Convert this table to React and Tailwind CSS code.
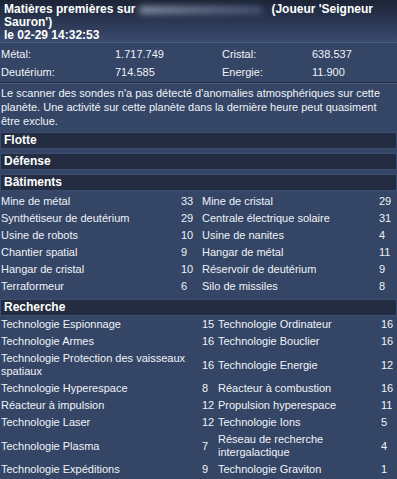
import React from "react";

const buildings = [
  ["Mine de métal", "33", "Mine de cristal", "29"],
  ["Synthétiseur de deutérium", "29", "Centrale électrique solaire", "31"],
  ["Usine de robots", "10", "Usine de nanites", "4"],
  ["Chantier spatial", "9", "Hangar de métal", "11"],
  ["Hangar de cristal", "10", "Réservoir de deutérium", "9"],
  ["Terraformeur", "6", "Silo de missiles", "8"],
];

const research = [
  ["Technologie Espionnage", "15", "Technologie Ordinateur", "16"],
  ["Technologie Armes", "16", "Technologie Bouclier", "16"],
  ["Technologie Protection des vaisseaux spatiaux", "16", "Technologie Energie", "12"],
  ["Technologie Hyperespace", "8", "Réacteur à combustion", "16"],
  ["Réacteur à impulsion", "12", "Propulsion hyperespace", "11"],
  ["Technologie Laser", "12", "Technologie Ions", "5"],
  ["Technologie Plasma", "7", "Réseau de recherche intergalactique", "4"],
  ["Technologie Expéditions", "9", "Technologie Graviton", "1"],
];

function SectionBar({ title }) {
  return (
    <div className="mt-[4px] h-[17px] border border-[#3b4c6f] bg-[#232c41] pl-[3px] text-[12px] font-bold leading-[15px] text-white">
      {title}
    </div>
  );
}

function Cell({ children }) {
  return <div className="flex items-center py-[2px] leading-[13px]">{children}</div>;
}

export default function App() {
  return (
    <div
      className="h-[479px] w-[397px] overflow-hidden bg-[#344565] text-[11px] text-[#f0f3f8]"
      style={{ fontFamily: "'Liberation Sans', Arial, sans-serif" }}
    >
      {/* report title; the planet name is masked by a blurred smudge */}
      <div className="h-[43px] border-b border-[#4a5c80] bg-gradient-to-b from-[#1c2436] to-[#3a4b6f] px-[4px] pt-[3px] text-[12px] font-bold leading-[13px] text-white">
        <div className="flex items-start whitespace-nowrap">
          <span>Matières premières sur</span>
          <span className="ml-[4px] h-[13px] w-[128px]">
            <span className="mt-[3px] block h-[8px] w-[124px] rounded-sm bg-gradient-to-r from-[#9aa6bc] via-[#6f7d98] to-[#4a5a7a] opacity-80 blur-[3px]" />
          </span>
          <span className="ml-[4px]">(Joueur 'Seigneur</span>
        </div>
        <div>Sauron')</div>
        <div>le 02-29 14:32:53</div>
      </div>

      {/* resources */}
      <div className="grid grid-cols-[114px_107px_90px_1fr] border-b border-[#26304a] pl-[1px] pt-[2px] pb-[1px] leading-[18px]">
        <div>Métal:</div>
        <div>1.717.749</div>
        <div>Cristal:</div>
        <div>638.537</div>
        <div>Deutérium:</div>
        <div>714.585</div>
        <div>Energie:</div>
        <div>11.900</div>
      </div>
      <div className="h-px bg-[#4a5c80]" />

      <p className="pl-[1px] pr-[4px] pt-[2px] leading-[14px]">
        Le scanner des sondes n'a pas détecté d'anomalies atmosphériques sur cette planète. Une activité sur cette planète dans la dernière heure peut quasiment être exclue.
      </p>

      <div className="mt-[2px]">
        <SectionBar title="Flotte" />
        <SectionBar title="Défense" />
        <SectionBar title="Bâtiments" />
      </div>

      <div className="mt-[2px] grid grid-cols-[180px_21px_177px_1fr] pl-[1px]">
        {buildings.map(([a, an, b, bn]) => (
          <React.Fragment key={a}>
            <Cell>{a}</Cell>
            <Cell>{an}</Cell>
            <Cell>{b}</Cell>
            <Cell>{bn}</Cell>
          </React.Fragment>
        ))}
      </div>

      <SectionBar title="Recherche" />

      <div className="grid grid-cols-[201px_16px_163px_1fr] pl-[1px]">
        {research.map(([a, an, b, bn]) => (
          <React.Fragment key={a}>
            <Cell>{a}</Cell>
            <Cell>{an}</Cell>
            <Cell>{b}</Cell>
            <Cell>{bn}</Cell>
          </React.Fragment>
        ))}
      </div>
    </div>
  );
}
